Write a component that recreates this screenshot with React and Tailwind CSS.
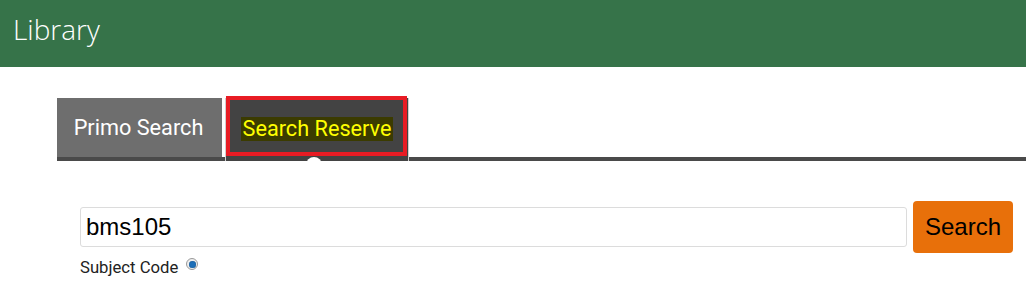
import React, { useState } from "react";

const App = () => {
  const [query, setQuery] = useState("bms105");

  return (
    <div className="w-[1026px] h-[281px] overflow-hidden bg-white">
      {/* top bar */}
      <div className="h-[67px] bg-[#367349] flex items-center pl-[13px]">
        <span className="text-white text-[28px] font-light font-['Open_Sans',sans-serif] pb-[9px]">
          Library
        </span>
      </div>

      {/* tabs */}
      <div className="pl-[57px] pt-[31px]">
        <div className="flex items-end border-b-4 border-[#4a4a4a] h-[63px]">
          <div className="w-[165px] h-[59px] bg-[#6e6e6e] flex items-center justify-center font-['Roboto',sans-serif] text-[21.7px] text-white pr-[2px] pt-[2px]">
            Primo Search
          </div>
          <div className="w-[3px] h-[59px] bg-white" />
          <div className="relative w-[184px] h-[63px] -mb-[4px] bg-[#434343] border-x border-[#d0d0d0] flex items-start justify-center pt-[19px] font-['Roboto',sans-serif] text-[21.7px]">
            <span className="bg-[#3b3b00] text-[#ffff00] px-[2px] leading-[24px]">Search Reserve</span>
            <div className="absolute left-[0px] top-[-2px] w-[181px] h-[60px] border-[4px] border-[#e81c24]" />
            <div className="absolute left-[80px] top-[59px] w-[16px] h-[16px] rounded-full bg-white" />
          </div>
        </div>
      </div>

      {/* search form */}
      <div className="pl-[80px] pt-[40px] pr-[13px]">
        <div className="flex items-center gap-[6px]">
          <input
            value={query}
            onChange={(e) => setQuery(e.target.value)}
            className="flex-1 h-[40px] border border-[#dcdcdc] rounded-[3px] px-[5px] text-[24px] text-black font-['Liberation_Sans',Arial,sans-serif] outline-none"
          />
          <button className="w-[100px] h-[52px] bg-[#e8700a] rounded-[4px] text-[24px] text-black font-['Liberation_Sans',Arial,sans-serif]">
            Search
          </button>
        </div>
        <div className="flex items-start gap-[8px] mt-[4px] font-['Roboto',sans-serif] text-[16.7px] text-[#222]">
          <span className="leading-[22px]">Subject Code</span>
          <span className="mt-[1px] w-[12px] h-[12px] rounded-full border border-[#9a9a9a] bg-[#eee] flex items-center justify-center">
            <span className="w-[7px] h-[7px] rounded-full bg-[#1e6fb8] shadow-[inset_0_0_1px_#0b3a66]" />
          </span>
        </div>
      </div>
    </div>
  );
};

export default App;
